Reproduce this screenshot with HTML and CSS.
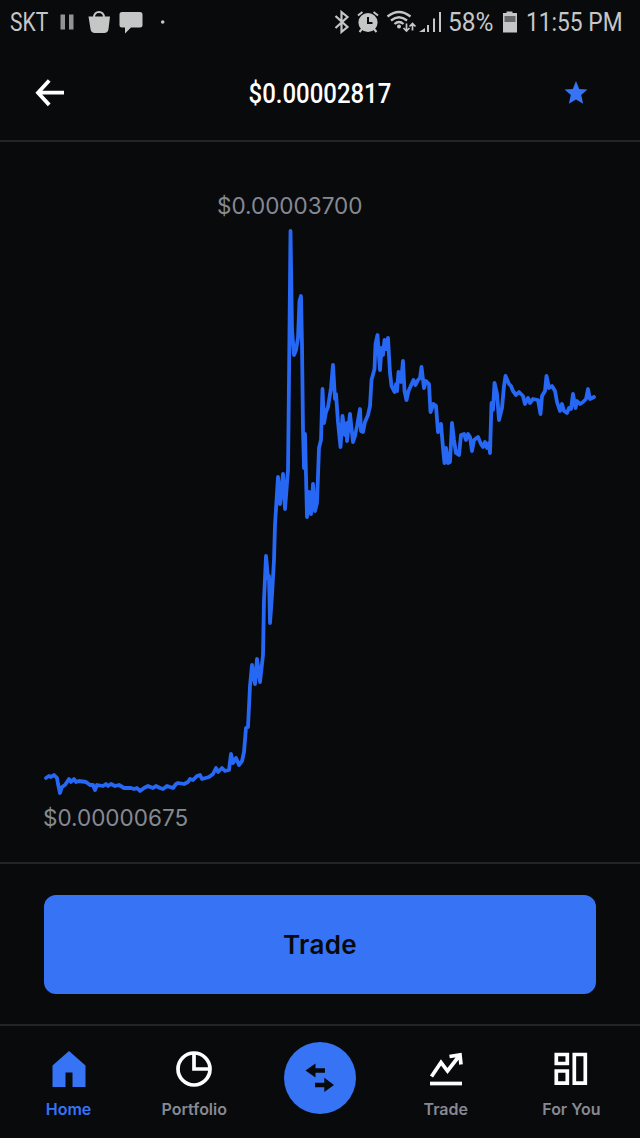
FILE: index.html
```html
<!DOCTYPE html>
<html lang="en">
<head>
<meta charset="utf-8">
<title>Price chart</title>
<link rel="stylesheet" href="styles.css">
</head>
<body>
<div class="app">
  <div class="status">
    <span class="carrier">SKT</span>
    <svg class="status-left" width="112" height="45" viewBox="56 0 112 45">
      <path fill="#929394" d="M60.5 14.5h4.500v15h-4.500zM69 14.500h4.500v15H69z"/>
      <path fill="#c5c7c7" d="M88.500 16.500h21.500l-1.500 12.500q-.5 4-4.500 4h-9q-4 0-4.500-4z"/>
      <path fill="none" stroke="#c5c7c7" stroke-width="2" d="M94 17.500c0-7.500 10-7.500 10 0"/>
      <path fill="#c5c7c7" d="M122 12h18q2.500 0 2.500 2.500v10.500q0 2.500-2.500 2.500h-9l-6 6v-6h-3q-2.500 0-2.500-2.500V14.500q0-2.500 2.500-2.500z"/>
      <circle cx="162.700" cy="22" r="1.800" fill="#c5c7c7"/>
    </svg>
    <svg class="status-right" width="114" height="45" viewBox="330 0 114 45">
      <path fill="none" stroke="#c5c7c7" stroke-width="2.200" d="m335.500 16 12 11-6 5V12l6 5-12 11"/>
      <circle cx="368" cy="22.500" r="9.600" fill="#c5c7c7"/>
      <path fill="none" stroke="#c5c7c7" stroke-width="2" d="m358 15.500 4.500-3.500M378 15.500l-4.500-3.500M362 29l-2.500 3M374 29l2.500 3"/>
      <path fill="none" stroke="#08090b" stroke-width="2" d="M368 17v6h4.500"/>
      <g fill="none" stroke="#c5c7c7" stroke-width="2.300">
        <path d="M387.500 16.500q11.500-9 23 0M391 20.500q8-6.500 16 0M394.500 24q4.500-4 9 0"/>
        <path stroke-width="1.700" d="M406.500 23.500v7m-3-2.500 3 3 3-3M412.500 30.500v-6.500m-3 2.500 3-3 3 3"/>
        <path stroke-width="2" d="M428 25v7M434 18.500V32M440 12v20"/>
      </g>
      <circle cx="399" cy="26.500" r="2" fill="#c5c7c7"/>
      <path fill="#c5c7c7" d="M419 32h6v-4z"/>
    </svg>
    <span class="percent">58%</span>
    <svg class="battery" width="16" height="45" viewBox="503 0 16 45">
      <path fill="#c5c7c7" d="M507.500 11.500h6V13h4.500v19.500h-14V13h3.500z"/>
      <path fill="#68696a" d="M505.500 16h11v6h-11z"/>
    </svg>
    <span class="clock">11:55 PM</span>
  </div>

  <header class="header">
    <svg width="30" height="30" viewBox="0 0 30 30">
      <path fill="none" stroke="#fff" stroke-width="3.800" d="M29 14.700H3M14.200 2.500 3 14.700l11.200 12.200"/>
    </svg>
    <h1 class="price">$0.00002817</h1>
    <svg width="24" height="24" viewBox="0 0 24 24">
      <path fill="#3773f5" d="m12 0 3.200 8 8.300.5-6.300 5.600 2 8.600-7.200-4.200-7.200 4.200 2-8.600L.5 8.500 8.800 8z"/>
    </svg>
  </header>

  <section class="chart">
    <p class="high">$0.00003700</p>
    <svg class="line" width="640" height="585" viewBox="0 220 640 585">
      <polyline points="46,778 49,776 51,777 54,775 57,778 58,784 60,793 62,787 65,785 69,779 71,782 74,779 76,782 79,781 86,782 90,785 93,785 95,790 97,785 103,786 106,784 108,786 111,784 115,786 119,785 124,788 131,788 134,789 137,788 140,791 144,788 148,786 153,788 156,786 160,788 163,789 167,786 173,788 176,784 178,783 184,784 188,782 190,779 193,780 197,776 200,775 202,779 209,777 213,774 216,768 218,772 222,768 225,771 229,770 231,754 233,763 236,758 239,765 242,761 244,752 246,728 248,727 250,686 252,665 255,684 257,659 260,682 263,655 264,600 266,556 268,578 269,576 270,623 272,595 274,560 275,525 278,477 280,504 283,474 285,509 288,470 289,380 290.500,231 292,330 294,355 296,350 298,338 299.500,301 301,296 302,345 303,430 304,468 305,434 307,517 309,492 311,514 313,484 315,511 317,503 319,448 321,440 322.500,389 324,423 326,412 328,407 331,388 333,365 335,399 336,394 338,422 340.500,447 342.500,416 345,435 347,423 347,441 350,414 353,442 355,436 357,426 360,409 361,431 363,432 365,422 368,415 370,406 371.500,380 374.500,369 375.500,344 377.500,335 380,370 381.500,348 383,355 384.500,340 386.500,349 388,338 390,373 391.500,386 394.500,392 396,384 397,391 398.500,372 401,382 403,361 404.500,391 406.500,400 408.500,391 413.500,380 415.500,385 418,380 420,378 421.500,367 424,388 426,381 429,384 430.500,412 433.500,404 436,406 438,432 441,424 443,448 444.500,463 446,448 448,463 450,462 452,423 454,440 456,453 459,455 461,435 464,434 466,440 468,434 470,437 472,451 474,440 478,437 481,444 483,447 485,442 487,448 489,443 490,453 491.500,403 493,410 494.500,383 497,394 499,420 502,408 504,386 505.500,376 509,384 511,386 513,391 516,395 519,392 523,396 525,404 528,398 530,403 533,399 538,400 540.500,414 542,396 545,391 546.500,376 549,388 552,386 555,391 557,402 560,411 562,404 564,411 567,413 569,408 571,409 573,394 575.500,408 577,401 580,404 583,402 586,399 588,389 590,399 594,397"/>
    </svg>
    <p class="low">$0.00000675</p>
  </section>

  <section class="action"><button class="trade">Trade</button></section>

  <nav class="tabs">
    <a class="tab active">
      <svg width="44" height="44" viewBox="0 0 44 44"><path fill="#3773f5" d="M5.500 20.500 22 6l16.500 14.500V42h-13V27.500h-7V42h-13z"/></svg>
      <span>Home</span>
    </a>
    <a class="tab">
      <svg width="44" height="44" viewBox="0 0 44 44"><g fill="none" stroke="#fff" stroke-width="3.700"><circle cx="22" cy="24" r="16"/><path d="M22 8v16h16"/></g></svg>
      <span>Portfolio</span>
    </a>
    <a class="tab">
      <span class="swap">
        <svg width="72" height="72" viewBox="0 0 72 72"><path fill="#08090b" d="M21.500 28.500 31.500 21.500v4.700H41v4.600h-9.500v4.700zM50 43l-9.700-7.200v4.900H31v4.600h9.300V50z"/></svg>
      </span>
    </a>
    <a class="tab">
      <svg width="44" height="44" viewBox="0 0 44 44"><g fill="none" stroke="#fff"><path stroke-width="3.700" d="M6 38.500h32"/><path stroke-width="3.700" d="m7.500 31.500 9.500-14 6.500 8.500L35.500 10.500M25.500 11.500l10.500-1.700 1 9.700"/></g></svg>
      <span>Trade</span>
    </a>
    <a class="tab">
      <svg width="44" height="44" viewBox="0 0 44 44"><path fill="none" stroke="#fff" stroke-width="3.700" d="M7.300 9.500h11v9h-11zM7.300 26h11v12.200h-11zM25.300 9.500h11v28.700h-11z"/></svg>
      <span>For You</span>
    </a>
  </nav>
</div>
</body>
</html>
```
FILE: styles.css
```css
* { box-sizing: border-box; margin: 0; }
body { background: #090a0c; }
svg { display: block; flex: none; }
.app {
  width: 640px;
  height: 1138px;
  display: flex;
  flex-direction: column;
  overflow: hidden;
  background: #090a0c;
  font-family: Inter, "Liberation Sans", sans-serif;
}
.status {
  height: 45px;
  display: flex;
  align-items: center;
  padding-left: 10px;
  color: #c5c7c7;
  font: 400 25px/45px Roboto, sans-serif;
  white-space: nowrap;
}
.carrier {
  width: 46px;
  transform: scaleX(0.84);
  transform-origin: left;
}
.status-left { margin-left: 0; }
.status-right { margin-left: 162px; }
.percent {
  width: 57px;
  padding-left: 4px;
  transform: scaleX(0.98);
  transform-origin: left;
}
.battery { margin-left: 1px; }
.clock {
  margin-left: 8px;
  transform: scaleX(0.91);
  transform-origin: left;
}
.header {
  height: 97px;
  display: flex;
  align-items: center;
  justify-content: space-between;
  padding: 0 52px 0 35px;
  border-bottom: 2px solid #232528;
}
.price {
  color: #fff;
  font: 500 28px/32px Roboto, sans-serif;
  transform: translate(5.500px, 0.5px) scaleX(0.855);
}
.chart {
  height: 720px;
  display: flex;
  flex-direction: column;
  align-items: flex-start;
  padding-top: 50px;
}
.high, .low {
  color: #858993;
  font-size: 22.500px;
  line-height: 28px;
  white-space: nowrap;
}
.high { margin-left: 217px; }
.low { margin: -1px 0 0 43px; }
.line polyline {
  fill: none;
  stroke: #2667f4;
  stroke-width: 3.8;
  stroke-linejoin: round;
  stroke-linecap: round;
}
.action {
  height: 162px;
  padding: 31px 44px 0;
  border-top: 2px solid #232528;
}
.trade {
  display: block;
  width: 552px;
  height: 99px;
  padding: 0;
  border: 0;
  border-radius: 12px;
  background: #3773f5;
  color: #08090b;
  font: 600 26px/100px Inter, sans-serif;
  letter-spacing: 0.3px;
}
.tabs {
  flex: 1;
  display: grid;
  grid-template-columns: repeat(5, 1fr);
  padding: 0 5.700px;
  border-top: 2px solid #232528;
}
.tab {
  display: flex;
  flex-direction: column;
  align-items: center;
  padding-top: 19px;
  color: #858993;
  font-size: 16px;
  font-weight: 600;
  line-height: 20px;
}
.tab > span:not(.swap) { margin-top: 10px; }
.active { color: #3773f5; }
.swap {
  width: 72px;
  height: 72px;
  margin-top: -3px;
  border-radius: 50%;
  background: #3773f5;
}
```
